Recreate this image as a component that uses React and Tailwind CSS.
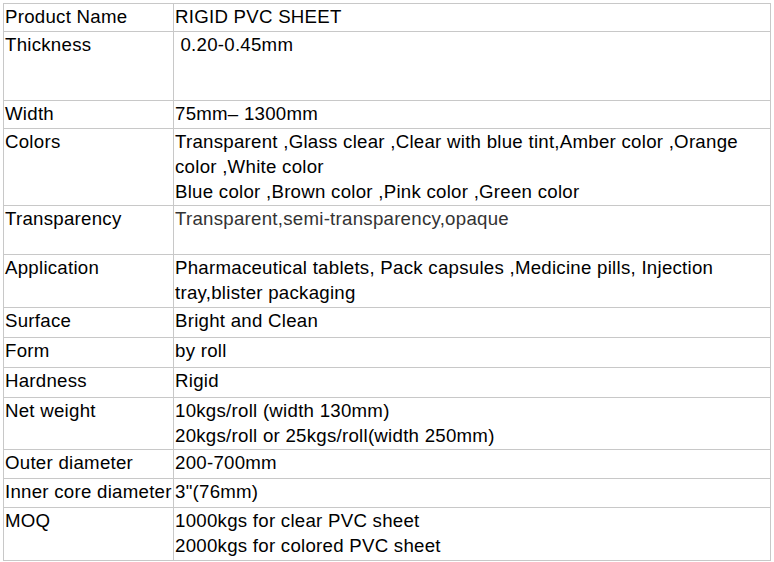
import React from "react";

const rows = [
  { label: "Product Name", h: "h-[28px]", value: ["RIGID PVC SHEET"] },
  { label: "Thickness", h: "h-[69px]", value: ["\u00a00.20-0.45mm"] },
  { label: "Width", h: "h-[28px]", value: ["75mm\u2013 1300mm"] },
  {
    label: "Colors",
    h: "h-[77px]",
    value: [
      "Transparent ,Glass clear ,Clear with blue tint,Amber color ,Orange",
      "color ,White color",
      "Blue color ,Brown color ,Pink color ,Green color",
    ],
  },
  {
    label: "Transparency",
    h: "h-[49px]",
    value: ["Transparent,semi-transparency,opaque"],
    gray: true,
  },
  {
    label: "Application",
    h: "h-[53px]",
    value: [
      "Pharmaceutical tablets, Pack capsules ,Medicine pills, Injection",
      "tray,blister packaging",
    ],
  },
  { label: "Surface", h: "h-[30px]", value: ["Bright and Clean"] },
  { label: "Form", h: "h-[30px]", value: ["by roll"] },
  { label: "Hardness", h: "h-[30px]", value: ["Rigid"] },
  {
    label: "Net weight",
    h: "h-[52px]",
    value: ["10kgs/roll (width 130mm)", "20kgs/roll or 25kgs/roll(width 250mm)"],
  },
  { label: "Outer diameter", h: "h-[29px]", value: ["200-700mm"] },
  { label: "Inner core diameter", h: "h-[29px]", value: ['3"(76mm)'] },
  {
    label: "MOQ",
    h: "h-[52px]",
    value: ["1000kgs for clear PVC sheet", "2000kgs for colored PVC sheet"],
  },
];

function App() {
  return (
    <div className="w-[774px] h-[562px] bg-white overflow-hidden pt-[3px] pl-[3px] font-['Liberation_Sans',Arial,sans-serif] text-[18.67px] leading-[25px] tracking-[0.26px] text-black">
      <div className="w-[768px] border border-[#c8c8c8]">
        {rows.map((row, i) => (
          <div
            key={row.label}
            className={`flex ${row.h} ${i < rows.length - 1 ? "border-b border-[#c8c8c8]" : ""}`}
          >
            <div className="w-[170px] shrink-0 border-r border-[#c8c8c8] pl-[1px] whitespace-nowrap">
              {row.label}
            </div>
            <div className={`flex-1 pl-[1px] whitespace-nowrap ${row.gray ? "text-[#333333]" : ""}`}>
              {row.value.map((line) => (
                <div key={line}>{line}</div>
              ))}
            </div>
          </div>
        ))}
      </div>
    </div>
  );
}

export default App;
